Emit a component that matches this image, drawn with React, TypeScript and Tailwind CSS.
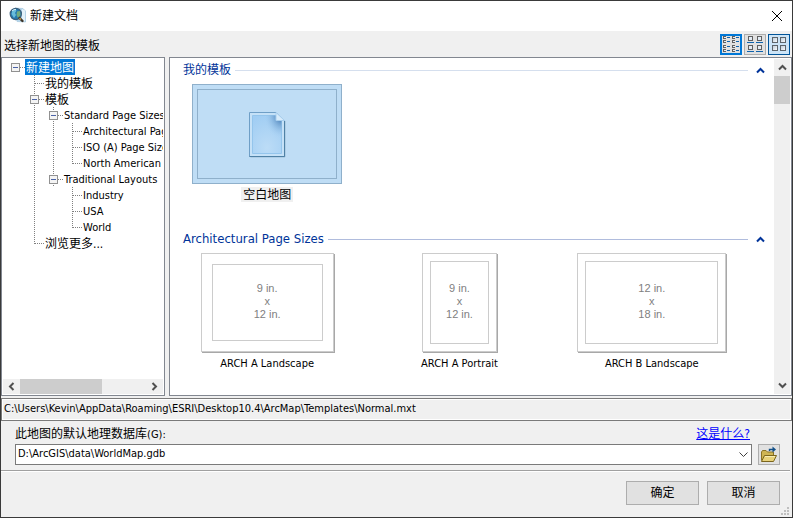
import { useState } from "react";
import clsx from "clsx";

type Guide = "blank" | "pipe" | "tee" | "elbow" | "box" | "root";

const treeRows: { label: string; guides: Guide[] }[] = [
  { label: "新建地图", guides: ["root"] },
  { label: "我的模板", guides: ["blank", "tee"] },
  { label: "模板", guides: ["blank", "box"] },
  { label: "Standard Page Sizes", guides: ["blank", "pipe", "box"] },
  { label: "Architectural Page Sizes", guides: ["blank", "pipe", "pipe", "tee"] },
  { label: "ISO (A) Page Sizes", guides: ["blank", "pipe", "pipe", "tee"] },
  { label: "North American (ANSI) Page Sizes", guides: ["blank", "pipe", "pipe", "elbow"] },
  { label: "Traditional Layouts", guides: ["blank", "pipe", "box"] },
  { label: "Industry", guides: ["blank", "pipe", "blank", "tee"] },
  { label: "USA", guides: ["blank", "pipe", "blank", "tee"] },
  { label: "World", guides: ["blank", "pipe", "blank", "elbow"] },
  { label: "浏览更多...", guides: ["blank", "elbow"] },
];

const pages = [
  { name: "ARCH A Landscape", size: ["9 in.", "x", "12 in."], box: "w-[133px] p-[10px]" },
  { name: "ARCH A Portrait", size: ["9 in.", "x", "12 in."], box: "w-[75px] p-[7px]" },
  { name: "ARCH B Landscape", size: ["12 in.", "x", "18 in."], box: "w-[149px] p-[7px]" },
];

function TreeGuide({ kind }: { kind: Guide }) {
  const hasBox = kind === "box" || kind === "root";
  return (
    <svg width="19" height="16" className="shrink-0" shapeRendering="crispEdges" aria-hidden="true">
      <g stroke="#808080" strokeDasharray="1 1">
        {(kind === "pipe" || kind === "tee" || kind === "box") && <path d="M9.5 0V16" />}
        {kind === "elbow" && <path d="M9.5 0V9" />}
        {kind !== "blank" && kind !== "pipe" && <path d="M10 8.5H19" />}
      </g>
      {hasBox && (
        <>
          <rect x="5.5" y="4.5" width="8" height="8" fill="#f4f4f4" stroke="#919191" />
          <path d="M7 8.5H12" stroke="#4b63a7" />
        </>
      )}
    </svg>
  );
}

function Arrow({ dir, color = "#505050" }: { dir: "up" | "down" | "left" | "right"; color?: string }) {
  const paths = {
    up: "M1 6.5L4.5 3L8 6.5",
    down: "M1 2.5L4.5 6L8 2.5",
    left: "M6.5 1L3 4.5L6.5 8",
    right: "M2.5 1L6 4.5L2.5 8",
  };
  return (
    <svg width="9" height="9" fill="none" stroke={color} strokeWidth="2" aria-hidden="true">
      <path d={paths[dir]} />
    </svg>
  );
}

function AppIcon() {
  return (
    <svg width="18" height="18" viewBox="0 0 18 18" aria-hidden="true">
      <path d="M6 1L14 1.5L16.5 4V15L8 14.5Z" fill="#b5d5ea" stroke="#9cc3dc" strokeWidth=".6" />
      <path d="M13 2L16 3.5V14.5L13 14Z" fill="#e3f1fa" />
      <circle cx="6.8" cy="7" r="5.6" fill="#2479b0" stroke="#3b5f7b" strokeWidth="1.2" />
      <path d="M3.5 3.5Q6 2 7.5 3.5L6 6L7 8L5 11L2.5 7Z" fill="#69bddb" />
      <path d="M8 4.5L11 4L11.5 8L9 11L7.5 8Z" fill="#74ab7d" />
      <path d="M3 4Q5 2 7 2.5" stroke="#d8f1fb" fill="none" />
      <path d="M10.5 11L13.5 14" stroke="#3d3428" strokeWidth="2.4" strokeLinecap="round" />
      <path d="M10.5 11L12 12.5" stroke="#c79c4e" strokeWidth="1.2" />
    </svg>
  );
}

function ListIcon() {
  return (
    <svg width="18" height="17" shapeRendering="crispEdges" aria-hidden="true">
      {[0, 4, 9, 13].map((y) =>
        [1, 10].map((x) => (
          <g key={`${x}-${y}`}>
            <rect x={x} y={y} width="3" height="3" fill="#606060" />
            <rect x={x + 1} y={y + 1} width="2" height="1" fill="#e8eef4" />
            <rect x={x + 4} y={y + 1} width="3" height="1" fill="#0f62ac" />
          </g>
        ))
      )}
    </svg>
  );
}

function TileIcon() {
  return (
    <svg width="18" height="17" shapeRendering="crispEdges" aria-hidden="true">
      {[0, 9].map((y) =>
        [2, 11].map((x) => (
          <g key={`${x}-${y}`}>
            <rect x={x + 0.5} y={y + 0.5} width="4" height="4" fill="#e3ebf4" stroke="#606060" />
            <rect x={x - 1} y={y + 6} width="7" height="1" fill="#0f62ac" />
          </g>
        ))
      )}
    </svg>
  );
}

function LargeIcon() {
  return (
    <svg width="18" height="17" aria-hidden="true">
      <defs>
        <linearGradient id="tile" x1="0" y1="0" x2="1" y2="1">
          <stop offset="0" stopColor="#b9c9d8" />
          <stop offset="1" stopColor="#fff" />
        </linearGradient>
      </defs>
      {[1.5, 9.5].map((y) =>
        [2.5, 10.5].map((x) => (
          <rect key={`${x}-${y}`} x={x} y={y} width="5" height="5" fill="url(#tile)" stroke="#5d656c" />
        ))
      )}
    </svg>
  );
}

function BlankMapIcon() {
  return (
    <svg width="38" height="47" viewBox="0 0 38 47" aria-hidden="true">
      <defs>
        <radialGradient id="sheet" cx=".5" cy=".85" r=".9">
          <stop offset="0" stopColor="#bcdcf6" />
          <stop offset="1" stopColor="#a0cdf3" />
        </radialGradient>
        <radialGradient id="fold" cx="1" cy="0" r=".6">
          <stop offset=".1" stopColor="#3f76b0" />
          <stop offset="1" stopColor="#a6d0f3" stopOpacity="0" />
        </radialGradient>
      </defs>
      <path d="M2.5 46H37V10" fill="none" stroke="#9dbdd5" />
      <path d="M1.5 1.5H28L36.5 10V45.5H1.5Z" fill="#c5e1f7" stroke="#6f9fc7" />
      <path d="M36.5 10V45.5H1.5" fill="none" stroke="#4f81a5" />
      <path d="M4.5 4.5H28L33.5 10V42.5H4.5Z" fill="url(#sheet)" stroke="#94c5ec" />
      <path d="M4.5 4.5H28L33.5 10V42.5H4.5Z" fill="url(#fold)" />
      <path d="M28 1.5V9.5H36.5Z" fill="#d7ebfb" stroke="#a9cfee" />
    </svg>
  );
}

function FolderIcon() {
  return (
    <svg width="18" height="17" viewBox="0 0 18 17" aria-hidden="true">
      <path d="M1.5 14.5V6L2.5 4.5H6L7.5 6H13.5V9" fill="#cfb553" stroke="#8a7226" />
      <path d="M1.5 15.5L4.5 9.5H16.5L13.5 15.5Z" fill="#e8d27a" stroke="#7b651d" />
      <path d="M5 10.5H15" stroke="#f8edb4" />
      <path d="M9.5 5V3.5H13" fill="none" stroke="#124f87" strokeWidth="1.4" />
      <path d="M12.5 .5L16 3.5L12.5 6.5Z" fill="#124f87" />
    </svg>
  );
}

function SectionTitle({ title, line }: { title: string; line: string }) {
  return (
    <div className="flex h-4 items-center pr-[9px] pl-[13px] text-[#003399]">
      <h2 className={clsx("leading-4 whitespace-nowrap", /^[A-Z]/.test(title) ? "text-[13px]" : "text-xs")}>
        {title}
      </h2>
      <div className={clsx("ml-1 h-px flex-1", line)} />
      <button type="button" aria-label="折叠" className="ml-2">
        <Arrow dir="up" color="#003399" />
      </button>
    </div>
  );
}

const views = [
  { name: "列表", icon: <ListIcon /> },
  { name: "小图标", icon: <TileIcon /> },
  { name: "大图标", icon: <LargeIcon /> },
];

const viewStyles = [
  "border-2 border-[#0078d7] bg-[#e1e1e1]",
  "border border-[#adadad] bg-[#e1e1e1]",
  "border border-[#005499] bg-[#cce4f7]",
];

export default function App() {
  const [selected, setSelected] = useState("新建地图");

  return (
    <div className="flex h-screen flex-col overflow-hidden border border-[#3a3a3a] bg-[#f0f0f0] font-['DejaVu_Sans_Condensed','Noto_Sans_CJK_SC',sans-serif] text-[11px] text-black">
      <header className="flex h-[30px] shrink-0 items-center bg-white pr-[9px] pl-2">
        <AppIcon />
        <h1 className="ml-[3px] flex-1 text-xs">新建文档</h1>
        <button type="button" aria-label="关闭">
          <svg width="12" height="12" stroke="#000" aria-hidden="true">
            <path d="M1 1L11 11M11 1L1 11" />
          </svg>
        </button>
      </header>

      <div className="flex h-[26px] shrink-0 items-center gap-[2px] pr-[2px] pl-[3px]">
        <p className="flex-1 pt-[3px] text-xs">选择新地图的模板</p>
        {views.map((view, i) => (
          <button
            key={view.name}
            type="button"
            aria-label={view.name}
            className={clsx("flex h-[21px] w-[22px] items-center justify-center", viewStyles[i])}
          >
            {view.icon}
          </button>
        ))}
      </div>

      <main className="flex min-h-0 flex-1 gap-1">
        <nav className="flex w-[164px] shrink-0 flex-col border border-[#828790] bg-white p-px">
          <ul role="tree" className="flex-1 overflow-hidden pl-[3px]">
            {treeRows.map((row) => (
              <li
                key={row.label}
                role="treeitem"
                aria-selected={selected === row.label}
                onClick={() => setSelected(row.label)}
                className="flex h-4 items-center whitespace-nowrap"
              >
                {row.guides.map((kind, i) => (
                  <TreeGuide key={i} kind={kind} />
                ))}
                <span
                  className={clsx(
                    "h-4 px-px leading-[18px]",
                    /^[A-Z]/.test(row.label) ? "text-[11px]" : "text-xs leading-[18px]",
                    selected === row.label && "bg-[#0078d7] text-white"
                  )}
                >
                  {row.label}
                </span>
              </li>
            ))}
          </ul>
          <div className="flex h-[15px] shrink-0 items-center bg-[#f0f0f0]">
            <button type="button" aria-label="向左" className="flex w-[17px] justify-center">
              <Arrow dir="left" />
            </button>
            <div className="flex h-full flex-1">
              <div className="h-full w-[65%] bg-[#cdcdcd]" />
            </div>
            <button type="button" aria-label="向右" className="flex w-[17px] justify-center">
              <Arrow dir="right" />
            </button>
          </div>
        </nav>

        <section className="flex min-w-0 flex-1 border border-[#828790] bg-white">
          <div className="flex min-w-0 flex-1 flex-col gap-[29px] overflow-hidden pt-1">
            <div className="flex flex-col gap-[6px]">
              <SectionTitle title="我的模板" line="bg-[#d5dfee]" />
              <div className="grid grid-cols-3 pr-[25px] pl-px">
                <button type="button" className="flex flex-col items-center gap-[3px]">
                  <div className="h-[100px] w-[150px] border border-[#8fb0cb] bg-[#bfddf5] p-1">
                    <div className="flex h-full items-center justify-center border border-[#8fb0cb]">
                      <BlankMapIcon />
                    </div>
                  </div>
                  <span className="h-[15px] bg-[#f0f0f0] px-[2px] text-xs leading-4">空白地图</span>
                </button>
              </div>
            </div>
            <div className="flex flex-col gap-[6px]">
              <SectionTitle title="Architectural Page Sizes" line="bg-[#b0bcdd]" />
              <div className="grid grid-cols-3 pr-[26px] pl-px">
                {pages.map((page) => (
                  <button key={page.name} type="button" className="flex flex-col items-center gap-1">
                    <div
                      className={clsx(
                        "h-[99px] border border-[#cccccc] bg-white shadow-[1px_1px_0_#a8a8a8]",
                        page.box
                      )}
                    >
                      <div className="flex h-full flex-col items-center justify-center border border-[#cccccc] pb-[2px] font-['Liberation_Sans',sans-serif] leading-[13px] text-[#808080]">
                        {page.size.map((line) => (
                          <span key={line}>{line}</span>
                        ))}
                      </div>
                    </div>
                    <span className="leading-[15px]">{page.name}</span>
                  </button>
                ))}
              </div>
            </div>
          </div>
          <div className="my-px mr-px flex w-4 shrink-0 flex-col items-center bg-[#f0f0f0]">
            <button type="button" aria-label="向上" className="flex h-[17px] items-center">
              <Arrow dir="up" />
            </button>
            <div className="w-full flex-1">
              <div className="h-7 bg-[#cdcdcd]" />
            </div>
            <button type="button" aria-label="向下" className="flex h-[17px] items-center">
              <Arrow dir="down" />
            </button>
          </div>
        </section>
      </main>

      <p className="mt-[2px] h-[23px] shrink-0 border border-[#7a7a7a] px-[2px] leading-[19px] shadow-[inset_0_0_0_1px_#fff]">
        C:\Users\Kevin\AppData\Roaming\ESRI\Desktop10.4\ArcMap\Templates\Normal.mxt
      </p>

      <div className="flex shrink-0 flex-col pt-[5px] pr-3 pl-[14px]">
        <div className="flex h-4 items-center justify-between pr-[30px] text-xs">
          <label htmlFor="gdb">
            此地图的默认地理数据库<span className="text-[11px]">(G):</span>
          </label>
          <a href="#" className="text-[#0000ff] underline">
            这是什么?
          </a>
        </div>
        <div className="mt-[2px] flex items-center gap-[6px]">
          <div className="relative flex-1">
            <select
              id="gdb"
              className="block h-[21px] w-full appearance-none border border-[#7a7a7a] bg-white px-[2px]"
            >
              <option>D:\ArcGIS\data\WorldMap.gdb</option>
            </select>
            <svg
              width="9"
              height="6"
              fill="none"
              stroke="#404040"
              className="pointer-events-none absolute top-2 right-1"
              aria-hidden="true"
            >
              <path d="M.5 .5L4.5 4.5L8.5 .5" />
            </svg>
          </div>
          <button
            type="button"
            aria-label="浏览"
            className="flex h-[21px] w-[22px] items-center justify-center border border-[#adadad] bg-[#e1e1e1]"
          >
            <FolderIcon />
          </button>
        </div>
      </div>

      <div className="mt-[5px] mr-[2px] shrink-0 border-t border-b border-t-[#a0a0a0] border-b-white" />

      <footer className="relative flex shrink-0 justify-end gap-2 pt-[9px] pr-3 pb-3 text-xs">
        <button type="button" className="h-6 w-[73px] border border-[#adadad] bg-[#e1e1e1]">
          确定
        </button>
        <button type="button" className="h-6 w-[73px] border border-[#adadad] bg-[#e1e1e1]">
          取消
        </button>
        <svg width="9" height="9" fill="#bfbfbf" className="absolute right-[2px] bottom-px" aria-hidden="true">
          <path d="M6 0h2v2h-2zM3 3h2v2h-2zM6 3h2v2h-2zM0 6h2v2h-2zM3 6h2v2h-2zM6 6h2v2h-2z" />
        </svg>
      </footer>
    </div>
  );
}
